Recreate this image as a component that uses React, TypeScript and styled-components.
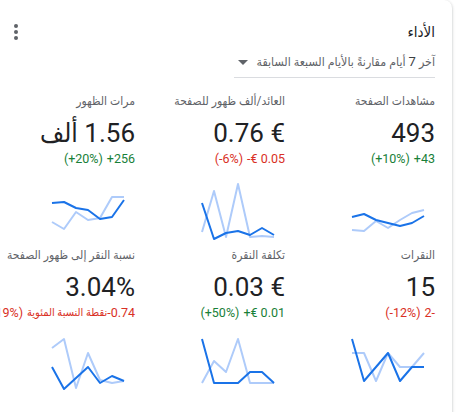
import React from 'react';
import styled, { createGlobalStyle } from 'styled-components';

const GlobalStyle = createGlobalStyle`
  html, body {
    margin: 0;
    padding: 0;
    background: #fff;
    overflow: hidden;
  }
  body {
    font-family: Roboto, "DejaVu Sans Condensed", "DejaVu Sans", sans-serif;
  }
`;

const Page = styled.div`
  width: 460px;
  height: 412px;
  overflow: hidden;
`;

const Card = styled.section`
  direction: rtl;
  width: 470px;
  height: 420px;
  margin-left: -18px;
  box-sizing: border-box;
  background: #fff;
  border-radius: 8px;
  box-shadow: 0 1px 2px rgba(60, 64, 67, 0.25), 0 1px 3px 1px rgba(60, 64, 67, 0.1);
  padding: 22px 17px 0 22px;
`;

const Header = styled.div`
  display: flex;
  justify-content: space-between;
  align-items: center;
  height: 20px;
`;

const Title = styled.h2`
  margin: 0;
  font-size: 15px;
  line-height: 20px;
  font-weight: 400;
  color: #202124;
`;

const Kebab = styled.button`
  flex: 0 0 24px;
  border: 0;
  background: none;
  padding: 0;
  width: 24px;
  height: 24px;
  display: flex;
  align-items: center;
  justify-content: center;
  cursor: pointer;
`;

const Range = styled.div`
  display: inline-flex;
  align-items: center;
  gap: 8px;
  margin-top: 10px;
  padding-bottom: 5px;
  border-bottom: 1px solid #dadce0;
  font-size: 12.3px;
  line-height: 20px;
  color: #5f6368;
  white-space: nowrap;
  min-width: 201px;
  box-sizing: border-box;
`;

const Digit = styled.span`
  font-size: 13px;
  color: #3c4043;
`;

const Grid = styled.div`
  display: grid;
  grid-template-columns: repeat(3, 150px);
  grid-auto-rows: 154px;
  margin-top: 13px;
`;

const Metric = styled.div`
  display: flex;
  flex-direction: column;
  align-items: stretch;
  white-space: nowrap;
`;

const Label = styled.div`
  font-size: 12px;
  line-height: 20px;
  color: #5f6368;
`;

const Value = styled.div`
  margin-top: 6px;
  font-size: 26px;
  line-height: 32px;
  color: #202124;
`;

const Delta = styled.div<{ $tone: 'up' | 'down' }>`
  font-size: 12.5px;
  line-height: 20px;
  color: ${(p) => (p.$tone === 'up' ? '#188038' : '#d93025')};
  display: flex;
  gap: 4px;
`;

const DeltaWords = styled.span`
  font-size: 11px;
  margin-right: -4px;
`;

const Spark = styled.svg`
  display: block;
  width: 72px;
  height: 58px;
  margin-top: 13px;
  margin-right: 11px;
  overflow: visible;
`;

type Item = {
  label: string;
  value: React.ReactNode;
  tone: 'up' | 'down';
  delta: React.ReactNode;
  dark: number[];
  light: number[];
};

const items: Item[] = [
  {
    label: 'مشاهدات الصفحة',
    value: '493',
    tone: 'up',
    delta: (
      <>
        <span dir="ltr">+43</span>
        <span dir="ltr">(+10%)</span>
      </>
    ),
    dark: [35, 32, 38, 41, 44, 41, 34],
    light: [48, 49, 39, 46, 38, 31, 28],
  },
  {
    label: 'العائد/ألف ظهور للصفحة',
    value: <span dir="ltr">0.76 €</span>,
    tone: 'down',
    delta: (
      <>
        <span dir="ltr">-€ 0.05</span>
        <span dir="ltr">(-6%)</span>
      </>
    ),
    dark: [21, 57, 51, 49, 53, 46, 53],
    light: [50, 9, 55, 2, 55, 54, 55],
  },
  {
    label: 'مرات الظهور',
    value: '1.56 ألف',
    tone: 'up',
    delta: (
      <>
        <span dir="ltr">+256</span>
        <span dir="ltr">(+20%)</span>
      </>
    ),
    dark: [21, 20, 26, 28, 37, 35, 18],
    light: [40, 47, 30, 38, 36, 15, 15],
  },
  {
    label: 'النقرات',
    value: '15',
    tone: 'down',
    delta: (
      <>
        <span dir="ltr">2-</span>
        <span dir="ltr">(-12%)</span>
      </>
    ),
    dark: [3, 45, 31, 17, 45, 31, 31],
    light: [17, 17, 45, 17, 31, 31, 17],
  },
  {
    label: 'تكلفة النقرة',
    value: <span dir="ltr">0.03 €</span>,
    tone: 'up',
    delta: (
      <>
        <span dir="ltr">+€ 0.01</span>
        <span dir="ltr">(+50%)</span>
      </>
    ),
    dark: [3, 47, 47, 47, 36, 36, 47],
    light: [47, 25, 36, 3, 47, 47, 47],
  },
  {
    label: 'نسبة النقر إلى ظهور الصفحة',
    value: <span dir="ltr">3.04%</span>,
    tone: 'down',
    delta: (
      <>
        <span dir="ltr">-0.74</span>
        <DeltaWords>نقطة النسبة المئوية</DeltaWords>
        <span dir="ltr">(-19%)</span>
      </>
    ),
    dark: [31, 53, 42, 31, 47, 40, 45],
    light: [12, 3, 52, 17, 44, 47, 45],
  },
];

const toPoints = (ys: number[]) => ys.map((y, i) => `${i * 12},${y}`).join(' ');

const Sparkline = ({ dark, light }: { dark: number[]; light: number[] }) => (
  <Spark viewBox="0 0 72 58">
    <polyline points={toPoints(light)} fill="none" stroke="#aecbfa" strokeWidth="2" strokeLinejoin="round" />
    <polyline points={toPoints(dark)} fill="none" stroke="#1a73e8" strokeWidth="2" strokeLinejoin="round" />
  </Spark>
);

export default function App() {
  return (
    <Page>
      <GlobalStyle />
      <Card>
        <Header>
          <Title>الأداء</Title>
          <Kebab type="button" aria-label="المزيد">
            <svg width="4" height="16" viewBox="0 0 4 16">
              <circle cx="2" cy="2" r="2" fill="#5f6368" />
              <circle cx="2" cy="8" r="2" fill="#5f6368" />
              <circle cx="2" cy="14" r="2" fill="#5f6368" />
            </svg>
          </Kebab>
        </Header>
        <Range>
          <span>
            آخر <Digit>7</Digit> أيام مقارنةً بالأيام السبعة السابقة
          </span>
          <svg width="10" height="5" viewBox="0 0 10 5">
            <path d="M0 0 L10 0 L5 5 Z" fill="#5f6368" />
          </svg>
        </Range>
        <Grid>
          {items.map((it) => (
            <Metric key={it.label}>
              <Label>{it.label}</Label>
              <Value>{it.value}</Value>
              <Delta $tone={it.tone}>{it.delta}</Delta>
              <Sparkline dark={it.dark} light={it.light} />
            </Metric>
          ))}
        </Grid>
      </Card>
    </Page>
  );
}
